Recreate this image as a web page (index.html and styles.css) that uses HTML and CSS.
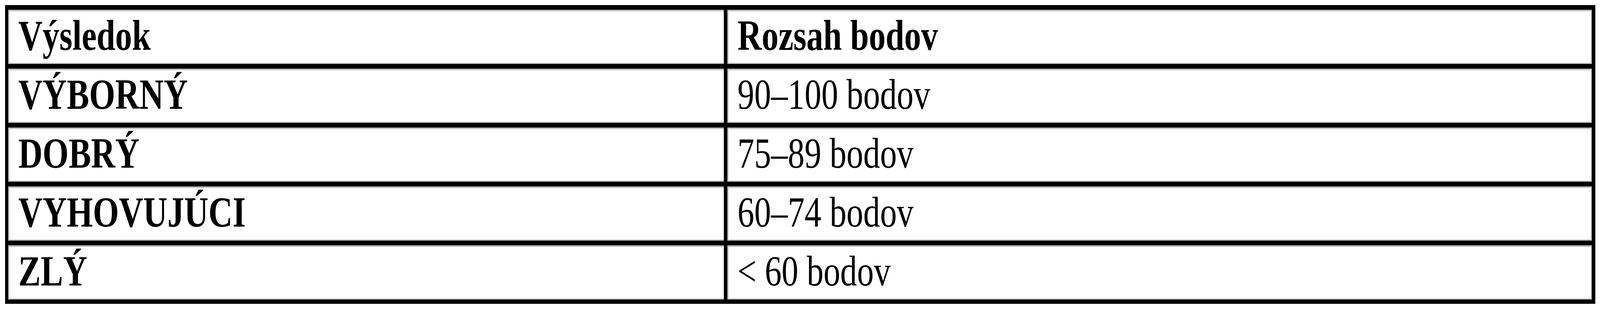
FILE: index.html
```html
<!DOCTYPE html>
<html lang="sk">
<head>
<meta charset="utf-8">
<title>Výsledok – rozsah bodov</title>
<link rel="stylesheet" href="styles.css">
</head>
<body>
<main class="page">
  <table class="grades">
    <thead>
      <tr>
        <th class="result"><span class="cell-text">Výsledok</span></th>
        <th class="range"><span class="cell-text">Rozsah bodov</span></th>
      </tr>
    </thead>
    <tbody>
      <tr>
        <th class="result"><span class="cell-text">VÝBORNÝ</span></th>
        <td class="range"><span class="cell-text">90–100 bodov</span></td>
      </tr>
      <tr>
        <th class="result"><span class="cell-text">DOBRÝ</span></th>
        <td class="range"><span class="cell-text">75–89 bodov</span></td>
      </tr>
      <tr>
        <th class="result"><span class="cell-text">VYHOVUJÚCI</span></th>
        <td class="range"><span class="cell-text">60–74 bodov</span></td>
      </tr>
      <tr>
        <th class="result"><span class="cell-text">ZLÝ</span></th>
        <td class="range"><span class="cell-text">&lt; 60 bodov</span></td>
      </tr>
    </tbody>
  </table>
</main>
</body>
</html>
```

FILE: styles.css
```css
/* Horizontal measures are fractions of a 5248px wide sheet (1vw = 52.48px there),
   vertical measures are plain pixels of the 800px tall sheet. */

html, body {
  margin: 0;
  padding: 0;
  background: #ffffff;
}

body {
  font-family: "Liberation Serif", "Times New Roman", serif;
  color: #000000;
}

.page {
  display: block;
  padding: 13px 0 0 0.3239vw;
}

.grades {
  border-collapse: separate;
  border-spacing: 0;
  border-top: 12px solid #000000;
  border-left: 0.2096vw solid #000000;
}

.grades th,
.grades td {
  box-sizing: content-box;
  font-size: 110px;
  line-height: 126px;
  height: 126px;
  padding: 3px 0.6288vw 10px 0.6288vw;
  text-align: left;
  vertical-align: top;
  white-space: nowrap;
  border-right: 0.2287vw solid #000000;
  border-bottom: 12px solid #000000;
  box-shadow:
    inset 0.0762vw 0 0 #c0c0c0,
    inset 0 4px 0 #c0c0c0,
    inset 0 -3px 0 #c0c0c0;
}

.grades .result {
  width: 43.464vw;
  font-weight: bold;
}

.grades .range {
  width: 52.763vw;
  box-shadow:
    inset 0.0762vw 0 0 #c0c0c0,
    inset 0 4px 0 #c0c0c0,
    inset 0 -3px 0 #c0c0c0,
    inset -0.0572vw 0 0 #c0c0c0;
}

.grades td.range {
  font-weight: normal;
}

.grades thead .range {
  font-weight: bold;
}

.grades tbody tr:last-child th,
.grades tbody tr:last-child td {
  border-bottom-width: 11px;
}

.cell-text {
  display: inline-block;
  transform-origin: 0 50%;
}

@media (max-width: 5247px) {
  .cell-text {
    transform: scaleX(0.780488);
  }
}
```
